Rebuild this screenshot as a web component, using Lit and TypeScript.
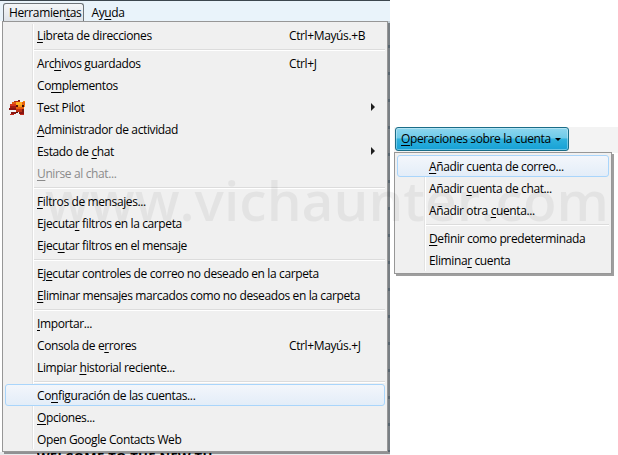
import { LitElement, html, css, nothing, svg } from "lit";
import { customElement } from "lit/decorators.js";

type Row = { t?: string; key?: string; arrow?: boolean; dis?: boolean; hot?: boolean; icon?: boolean; sep?: boolean };
const S: Row = { sep: true };
// "_" precedes the underlined mnemonic letter
const MAIN: Row[] = [
  { t: "_Libreta de direcciones", key: "Ctrl+Mayús.+B" }, S,
  { t: "Arc_hivos guardados", key: "Ctrl+J" },
  { t: "Co_mplementos" },
  { t: "Test Pilot", arrow: true, icon: true },
  { t: "_Administrador de actividad" },
  { t: "Estado de _chat", arrow: true },
  { t: "_Unirse al chat...", dis: true }, S,
  { t: "_Filtros de mensajes..." },
  { t: "Ejecuta_r filtros en la carpeta" },
  { t: "Ejec_utar filtros en el mensaje" }, S,
  { t: "Ej_ecutar controles de correo no deseado en la carpeta" },
  { t: "_Eliminar mensajes marcados como no deseados en la carpeta" }, S,
  { t: "_Importar..." },
  { t: "Consola de e_rrores", key: "Ctrl+Mayús.+J" },
  { t: "Limpiar _historial reciente..." }, S,
  { t: "Co_nfiguración de las cuentas...", hot: true },
  { t: "_Opciones..." },
  { t: "Open Google Contacts Web" },
];
const ACCOUNT: Row[] = [
  { t: "_Añadir cuenta de correo...", hot: true },
  { t: "Añadir _cuenta de chat..." },
  { t: "Añadir otra _cuenta..." }, S,
  { t: "_Definir como predeterminada" },
  { t: "Elimina_r cuenta" },
];

const label = (t: string) => {
  const i = t.indexOf("_");
  if (i < 0) return t;
  return html`${t.slice(0, i)}<u>${t[i + 1]}</u>${t.slice(i + 2)}`;
};

// Pixel art of the Test Pilot mascot
const PIXELS: [number, number, number, number, string][] = [
  [8, 0, 2, 1, "#7a1a10"], [4, 1, 6, 1, "#b02a12"], [12, 1, 2, 1, "#f08a10"],
  [3, 2, 3, 1, "#e05a10"], [6, 2, 5, 2, "#ffb020"], [11, 2, 3, 2, "#e8600f"],
  [1, 3, 5, 2, "#d8361a"], [6, 4, 2, 2, "#5a1208"], [8, 4, 3, 2, "#f59a1a"], [11, 4, 2, 2, "#3a0d08"], [13, 4, 1, 2, "#f08a10"],
  [1, 5, 5, 2, "#a01c14"], [6, 6, 7, 2, "#e8600f"],
  [0, 7, 6, 2, "#8a1410"], [6, 8, 5, 2, "#c03014"], [11, 8, 2, 2, "#7a1a10"],
  [2, 10, 4, 2, "#8a1410"], [6, 10, 2, 1, "#501008"], [9, 10, 4, 2, "#8a1410"],
  [1, 12, 3, 1, "#c02818"], [10, 12, 3, 1, "#c02818"],
];

function svgRect(x: number, y: number, w: number, h: number, c: string) {
  return svg`<rect x=${x} y=${y} width=${w} height=${h} fill=${c}></rect>`;
}

@customElement("app-root")
export class AppRoot extends LitElement {
  static styles = css`
    :host { display: block; width: 618px; height: 455px; }
    .page {
      position: relative; width: 618px; height: 455px; overflow: hidden; background: #fff;
      font: 12px/22px "Open Sans", "Noto Sans", sans-serif; color: #000;
      letter-spacing: -0.38px;
    }
    u { text-underline-offset: 2px; text-decoration-thickness: 1px; }
    .menubar {
      display: flex; align-items: flex-end; gap: 1px; box-sizing: border-box;
      width: 390px; height: 21px; padding-left: 3px;
      background: #e9f3fa; border-top: 1px solid #3c464e;
    }
    .top {
      box-sizing: border-box; height: 18px; line-height: 17px; padding: 0 2px 0 5px;
      border: 1px solid transparent;
    }
    .top.open {
      border: 1px solid #6d7378; border-bottom: 0; border-radius: 3px 3px 0 0;
      background: linear-gradient(#f4f6f8, #dfe4e9);
    }
    .behind { position: absolute; left: 388px; top: 21px; width: 2px; height: 431px;
      background: repeating-linear-gradient(#c3ced6 0 24px, #8ea4b4 24px 27px); }
    .behind-text {
      position: absolute; left: 37px; top: 446px; width: 176px; height: 9px; overflow: hidden;
      font: bold 13px/22px "Open Sans", sans-serif; letter-spacing: 0.3px; white-space: nowrap;
    }
    .behind-line { position: absolute; left: 0; top: 452px; width: 390px; height: 3px; background: #cfd3d6; opacity: .45; }
    .bar-back { position: absolute; left: 394px; top: 127px; width: 224px; height: 26px; background: #f3f3f3; }

    .menu {
      position: absolute; box-sizing: border-box; background: #f0f0f0;
      border: 1px solid #979797; box-shadow: 2px 2px 0 rgba(0, 0, 0, 0.38);
      padding: 2px 2px 1px; display: flex; flex-direction: column;
    }
    .menu.main { left: 2px; top: 21px; width: 386px; height: 431px; }
    .menu.account { left: 394px; top: 152px; width: 218px; height: 122px; }
    .gutter { position: absolute; top: 2px; bottom: 2px; left: 29px; width: 1px; background: #e2e2e2; box-shadow: 1px 0 0 #fff; }
    .row {
      position: relative; display: flex; align-items: center; box-sizing: border-box; flex: none;
      height: 22px; padding: 1px 20px 0 31px; white-space: nowrap;
      border: 1px solid transparent; border-radius: 3px;
    }
    .row .txt { flex: 1; }
    .row .key { width: 75px; }
    .row.dis { color: #8b8b8b; }
    .row.hot {
      border-color: #a9d5fb;
      background: linear-gradient(#f3f6fb, #e3edf8);
    }
    .sep { height: 6px; flex: none; box-sizing: border-box; display: flex; align-items: center; padding: 1px 0 0 28px; }
    .sep i { display: block; flex: 1; height: 1px; background: #dcdcdc; box-shadow: 0 1px 0 #fff; }
    .arrow {
      position: absolute; right: 9px; top: 6px; width: 0; height: 0;
      border-left: 4px solid #1e1e1e; border-top: 4px solid transparent; border-bottom: 4px solid transparent;
    }
    .icon { position: absolute; left: 3px; top: 3px; width: 16px; height: 15px; }

    .ops {
      position: absolute; left: 395px; top: 127px; box-sizing: border-box;
      width: 174px; height: 24px; display: flex; align-items: center; gap: 4px; padding: 0 5px;
      border: 1px solid #1a6d88; border-radius: 3px; white-space: nowrap;
      background: linear-gradient(#8ed6ee 0, #6fcbe9 45%, #2fb1dc 50%, #16a1d6 100%);
      box-shadow: inset 0 0 0 1px rgba(255, 255, 255, 0.35);
    }
    .caret { width: 0; height: 0; border-left: 3px solid transparent; border-right: 3px solid transparent; border-top: 3px solid #000; margin-top: 1px; }
    .watermark {
      position: absolute; left: 45px; top: 168px; pointer-events: none; white-space: nowrap;
      font: 600 55px/64px "Open Sans", sans-serif; letter-spacing: 0; color: rgba(0, 0, 0, 0.05);
    }
  `;

  private rows(list: Row[]) {
    return list.map((r) =>
      r.sep
        ? html`<div class="sep"><i></i></div>`
        : html`<div class="row ${r.dis ? "dis" : ""} ${r.hot ? "hot" : ""}">
            ${r.icon
              ? html`<svg class="icon" viewBox="0 0 14 13" shape-rendering="crispEdges">
                  ${PIXELS.map(([x, y, w, h, c]) => svgRect(x, y, w, h, c))}
                </svg>`
              : nothing}
            <span class="txt">${label(r.t!)}</span>
            ${r.key ? html`<span class="key">${r.key}</span>` : nothing}
            ${r.arrow ? html`<span class="arrow"></span>` : nothing}
          </div>`
    );
  }

  render() {
    return html`<div class="page">
      <div class="menubar">
        <div class="top open">Herramien<u>t</u>as</div>
        <div class="top">Ay<u>u</u>da</div>
      </div>
      <div class="behind"></div>
      <div class="behind-line"></div>
      <div class="behind-text">WELCOME TO THE NEW THUNDERBIRD</div>
      <div class="bar-back"></div>
      <div class="menu main"><span class="gutter"></span>${this.rows(MAIN)}</div>
      <div class="ops"><span><u>O</u>peraciones sobre la cuenta</span><span class="caret"></span></div>
      <div class="menu account"><span class="gutter"></span>${this.rows(ACCOUNT)}</div>
      <div class="watermark">www.vichaunter.com</div>
    </div>`;
  }
}
